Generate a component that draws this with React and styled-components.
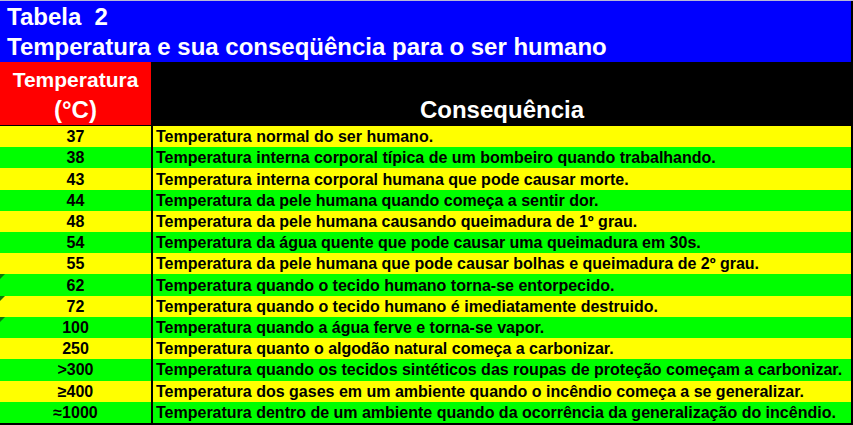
import React from "react";
import styled, { createGlobalStyle } from "styled-components";

const GlobalStyle = createGlobalStyle`
  html, body {
    margin: 0;
    padding: 0;
    background: #000;
  }
  body {
    font-family: "Liberation Sans", Arial, sans-serif;
  }
`;

const Sheet = styled.div`
  width: 853px;
  height: 425px;
  box-sizing: border-box;
  background: #000;
  border-top: 1px solid #b8b8d8;
  padding-right: 2px;
  display: flex;
  flex-direction: column;
  overflow: hidden;
`;

const Title = styled.div`
  height: 61px;
  box-sizing: border-box;
  background: #0000ff;
  color: #fff;
  font-weight: bold;
  font-size: 24px;
  line-height: 30px;
  padding: 1px 7px 0;
  white-space: pre;
`;

const Table = styled.div`
  display: grid;
  grid-template-columns: 151px 1fr;
  grid-template-rows: 64px repeat(14, 1fr);
  column-gap: 2px;
  height: 361px;
`;

const HeadTemp = styled.div`
  background: #ff0000;
  color: #fff;
  font-weight: bold;
  display: flex;
  flex-direction: column;
  align-items: center;
  justify-content: center;
  margin-bottom: 1px;
  padding-top: 2px;
`;

const HeadLine = styled.span`
  font-size: ${(p) => p.size}px;
  line-height: 30px;
`;

const HeadConseq = styled.div`
  background: #000;
  color: #fff;
  font-weight: bold;
  font-size: 24px;
  display: flex;
  align-items: flex-end;
  justify-content: center;
  padding-bottom: 2px;
`;

const Cell = styled.div`
  position: relative;
  background: ${(p) => (p.even ? "#ffff00" : "#00ff00")};
  color: #000;
  font-size: 16px;
  font-weight: bold;
  display: flex;
  align-items: center;
  justify-content: ${(p) => (p.center ? "center" : "flex-start")};
  padding-left: ${(p) => (p.center ? 0 : 3)}px;
  padding-top: 1px;
  white-space: nowrap;

  ${(p) =>
    p.flag &&
    `
    &::before {
      content: "";
      position: absolute;
      top: 0;
      left: 0;
      border-top: 5px solid #0b7a0b;
      border-right: 5px solid transparent;
    }
  `}
`;

const rows = [
  ["37", "Temperatura normal do ser humano."],
  ["38", "Temperatura interna corporal típica de um bombeiro quando trabalhando."],
  ["43", "Temperatura interna corporal humana que pode causar morte."],
  ["44", "Temperatura da pele humana quando começa a sentir dor."],
  ["48", "Temperatura da pele humana causando queimadura de 1º grau."],
  ["54", "Temperatura da água quente que pode causar uma queimadura em 30s."],
  ["55", "Temperatura da pele humana que pode causar bolhas e queimadura de 2º grau."],
  ["62", "Temperatura quando o tecido humano torna-se entorpecido.", true],
  ["72", "Temperatura quando o tecido humano é imediatamente destruido.", true],
  ["100", "Temperatura quando a água ferve e torna-se vapor.", true],
  ["250", "Temperatura quanto o algodão natural começa a carbonizar."],
  [">300", "Temperatura quando os tecidos sintéticos das roupas de proteção começam a carbonizar."],
  ["≥400", "Temperatura dos gases em um ambiente quando o incêndio começa a se generalizar."],
  ["≈1000", "Temperatura dentro de um ambiente quando da ocorrência da generalização do incêndio."],
];

const App = () => {
  return (
    <>
      <GlobalStyle />
      <Sheet>
        <Title>
          {"Tabela  2\nTemperatura e sua conseqüência para o ser humano"}
        </Title>
        <Table>
          <HeadTemp>
            <HeadLine size={21}>Temperatura</HeadLine>
            <HeadLine size={24}>(°C)</HeadLine>
          </HeadTemp>
          <HeadConseq>Consequência</HeadConseq>
          {rows.map(([temp, text, flag], i) => (
            <React.Fragment key={temp}>
              <Cell center even={i % 2 === 0} flag={flag}>
                {temp}
              </Cell>
              <Cell even={i % 2 === 0}>{text}</Cell>
            </React.Fragment>
          ))}
        </Table>
      </Sheet>
    </>
  );
};

export default App;
